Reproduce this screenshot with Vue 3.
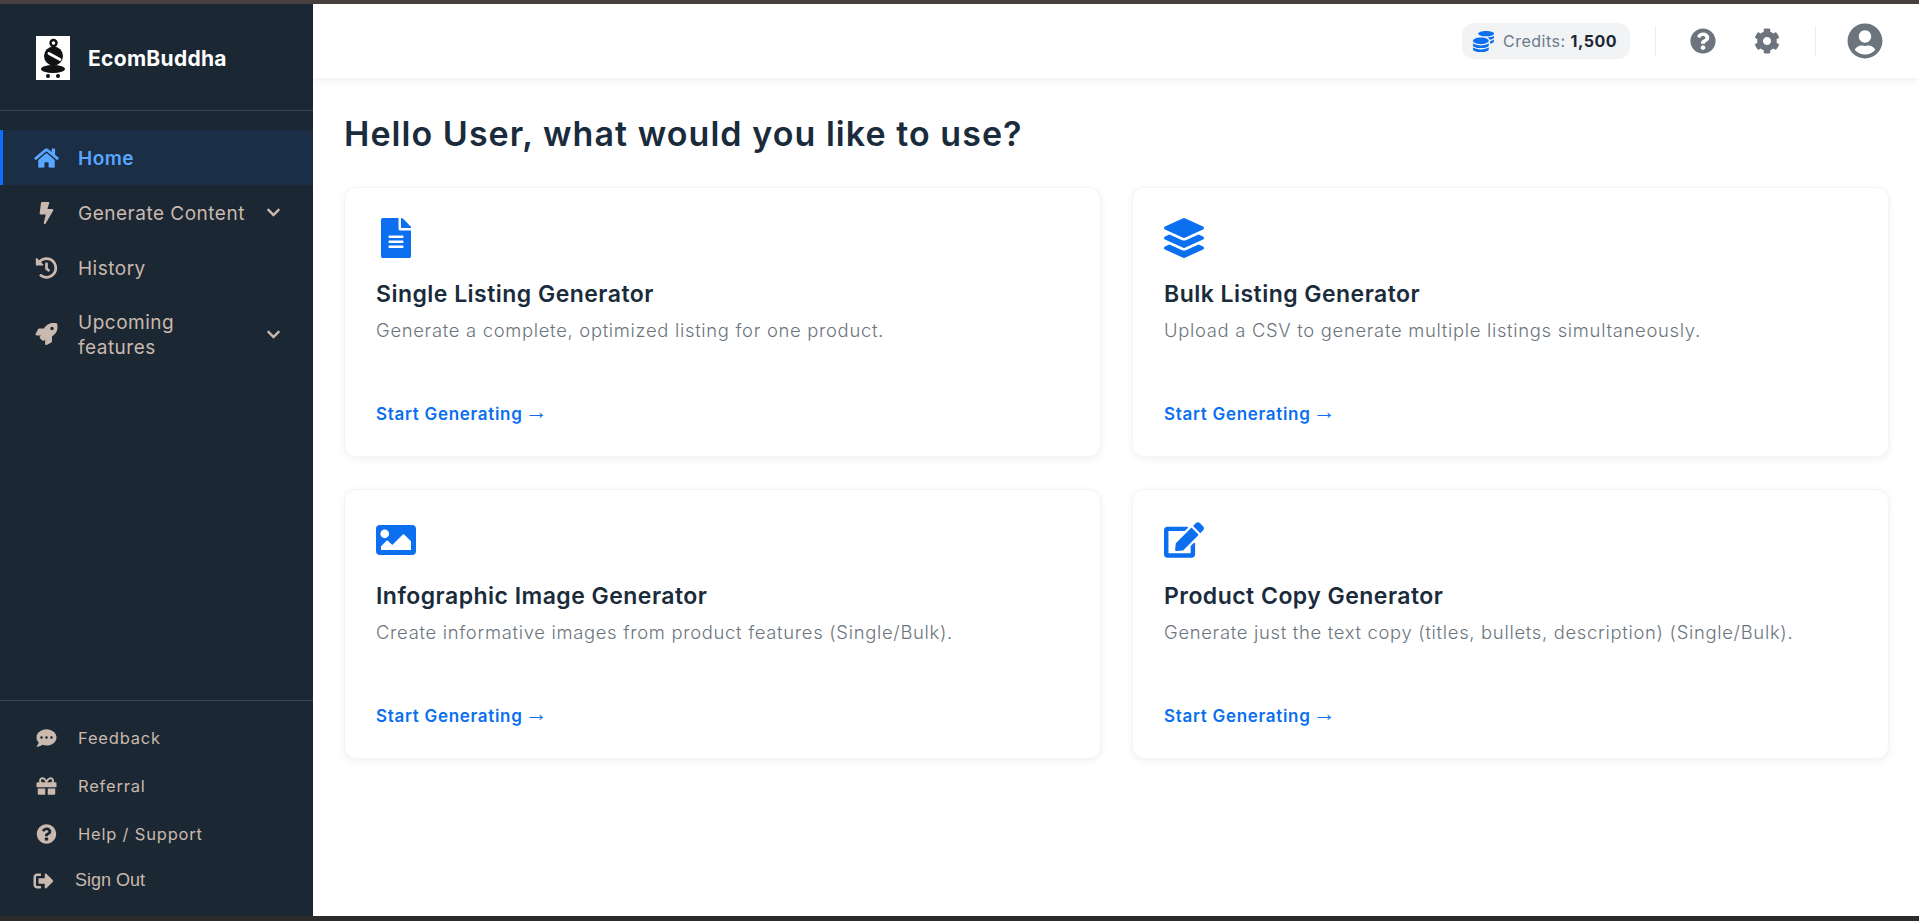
<template>
  <div class="page">
    <div class="strip-top"></div>
    <div class="shell">
      <aside class="sidebar">
        <div class="brand">
          <div class="logo">
            <svg viewBox="0 0 34 44" width="34" height="44">
              <rect width="34" height="44" fill="#fff" />
              <circle cx="17.5" cy="7" r="3" fill="none" stroke="#111" stroke-width="2.4" />
              <circle cx="17.5" cy="20" r="9.5" fill="#111" />
              <path d="M13 17.5 L24 23.5" stroke="#fff" stroke-width="2.8" stroke-linecap="round" />
              <ellipse cx="17" cy="33" rx="12" ry="4" fill="#111" />
              <circle cx="12" cy="40" r="2" fill="#111" />
              <circle cx="22" cy="40" r="2" fill="#111" />
            </svg>
          </div>
          <span class="brand-name">EcomBuddha</span>
        </div>

        <nav class="nav">
          <a v-for="item in navItems" :key="item.label" class="nav-item" :class="{ active: item.active }">
            <svg class="nav-icon" :viewBox="item.box"><path :d="item.d" fill="currentColor" /></svg>
            <span class="nav-label">{{ item.label }}</span>
            <svg v-if="item.caret" class="caret" viewBox="0 0 448 512"><path :d="chevron" fill="currentColor" /></svg>
          </a>
        </nav>

        <div class="foot">
          <a v-for="item in footItems" :key="item.label" class="foot-item">
            <svg class="foot-icon" :viewBox="item.box"><path :d="item.d" fill="currentColor" /></svg>
            <span>{{ item.label }}</span>
          </a>
          <a class="sign-out">
            <svg class="foot-icon" viewBox="0 0 512 512"><path :d="signOut" fill="currentColor" /></svg>
            <span>Sign Out</span>
          </a>
        </div>
      </aside>

      <div class="content">
        <header class="topbar">
          <div class="credits">
            <svg class="coins" viewBox="0 0 512 512"><path :d="coins" fill="currentColor" /></svg>
            <span>Credits: <b>1,500</b></span>
          </div>
          <div class="divider first"></div>
          <svg class="top-icon help" viewBox="0 0 512 512"><path :d="question" fill="currentColor" /></svg>
          <svg class="top-icon gear" viewBox="0 0 512 512"><path :d="cog" fill="currentColor" /></svg>
          <div class="divider second"></div>
          <svg class="avatar" viewBox="0 0 496 512"><path :d="userCircle" fill="currentColor" /></svg>
        </header>

        <main class="main">
          <h1>Hello User, what would you like to use?</h1>
          <div class="grid">
            <div v-for="card in cards" :key="card.title" class="card">
              <svg class="card-icon" :viewBox="card.box"><path :d="card.d" fill="currentColor" /></svg>
              <h2>{{ card.title }}</h2>
              <p>{{ card.text }}</p>
              <a class="start">Start Generating <span class="arrow">→</span></a>
            </div>
          </div>
        </main>
      </div>
    </div>
    <div class="strip-bottom"></div>
  </div>
</template>

<script setup>
const chevron = 'M207.029 381.476L12.686 187.132c-9.373-9.373-9.373-24.569 0-33.941l22.667-22.667c9.357-9.357 24.522-9.375 33.901-.04L224 284.505l154.745-154.021c9.379-9.335 24.544-9.317 33.901.04l22.667 22.667c9.373 9.373 9.373 24.569 0 33.941L240.971 381.476c-9.373 9.372-24.569 9.372-33.942 0z'
const question = 'M504 256c0 136.997-111.043 248-248 248S8 392.997 8 256C8 119.083 119.043 8 256 8s248 111.083 248 248zM262.655 90c-54.497 0-89.255 22.957-116.549 63.758-3.536 5.286-2.353 12.415 2.715 16.258l34.699 26.31c5.205 3.947 12.621 3.008 16.665-2.122 17.864-22.658 30.113-35.797 57.303-35.797 20.429 0 45.698 13.148 45.698 32.958 0 14.976-12.363 22.667-32.534 33.976C247.128 238.528 216 254.941 216 296v4c0 6.627 5.373 12 12 12h56c6.627 0 12-5.373 12-12v-1.333c0-28.462 83.186-29.647 83.186-106.667 0-58.002-60.165-102-116.531-102zM256 338c-25.365 0-46 20.635-46 46 0 25.364 20.635 46 46 46s46-20.636 46-46c0-25.365-20.635-46-46-46z'
const signOut = 'M497 273L329 441c-15 15-41 4.5-41-17v-96H152c-13.3 0-24-10.7-24-24v-96c0-13.3 10.7-24 24-24h136V88c0-21.4 25.9-32 41-17l168 168c9.3 9.4 9.3 24.6 0 34zM192 436v-40c0-6.6-5.4-12-12-12H96c-17.7 0-32-14.3-32-32V160c0-17.7 14.3-32 32-32h84c6.6 0 12-5.4 12-12V76c0-6.6-5.4-12-12-12H96c-53 0-96 43-96 96v192c0 53 43 96 96 96h84c6.6 0 12-5.4 12-12z'
const cog = 'M487.4 315.7l-42.6-24.6c4.3-23.2 4.3-47 0-70.2l42.6-24.6c4.9-2.8 7.1-8.6 5.5-14-11.1-35.6-30-67.8-54.7-94.6-3.8-4.1-10-5.1-14.8-2.3L380.8 110c-17.9-15.4-38.5-27.3-60.8-35.1V25.8c0-5.6-3.9-10.5-9.4-11.7-36.7-8.2-74.3-7.8-109.2 0-5.5 1.2-9.4 6.1-9.4 11.7V75c-22.2 7.9-42.8 19.8-60.8 35.1L88.7 85.5c-4.9-2.8-11-1.9-14.8 2.3-24.7 26.7-43.6 58.9-54.7 94.6-1.7 5.4.6 11.2 5.5 14L67.3 221c-4.3 23.2-4.3 47 0 70.2l-42.6 24.6c-4.9 2.8-7.1 8.6-5.5 14 11.1 35.6 30 67.8 54.7 94.6 3.8 4.1 10 5.1 14.8 2.3l42.6-24.6c17.9 15.4 38.5 27.3 60.8 35.1v49.2c0 5.6 3.9 10.5 9.4 11.7 36.7 8.2 74.3 7.8 109.2 0 5.5-1.2 9.4-6.1 9.4-11.7v-49.2c22.2-7.9 42.8-19.8 60.8-35.1l42.6 24.6c4.9 2.8 11 1.9 14.8-2.3 24.7-26.7 43.6-58.9 54.7-94.6 1.5-5.5-.7-11.3-5.6-14.1zM256 336c-44.1 0-80-35.9-80-80s35.9-80 80-80 80 35.9 80 80-35.9 80-80 80z'
const userCircle = 'M248 8C111 8 0 119 0 256s111 248 248 248 248-111 248-248S385 8 248 8zm0 96c48.6 0 88 39.4 88 88s-39.4 88-88 88-88-39.4-88-88 39.4-88 88-88zm0 344c-58.7 0-111.3-26.6-146.5-68.2 18.8-35.4 55.6-59.8 98.5-59.8 2.4 0 4.8.4 7.1 1.1 13 4.2 26.6 6.9 40.9 6.9 14.3 0 28-2.7 40.9-6.9 2.3-.7 4.7-1.1 7.1-1.1 42.9 0 79.7 24.4 98.5 59.8C359.3 421.4 306.7 448 248 448z'
const coins = 'M0 405.3V448c0 35.3 86 64 192 64s192-28.7 192-64v-42.7C342.7 434.4 267.2 448 192 448S41.3 434.4 0 405.3zM320 128c106 0 192-28.7 192-64S426 0 320 0 128 28.7 128 64s86 64 192 64zM0 300.4V352c0 35.3 86 64 192 64s192-28.7 192-64v-51.6c-41.3 34-116.9 51.6-192 51.6S41.3 334.4 0 300.4zm416 11c57.3-11.1 96-31.7 96-55.4v-42.7c-23.2 16.4-57.3 27.6-96 34.5v63.6zM192 160C86 160 0 195.8 0 240s86 80 192 80 192-35.8 192-80-86-80-192-80zm219.3 56.3c60-10.8 100.7-32 100.7-56.3v-42.7c-35.5 25.1-96.5 38.6-160.7 41.8 29.5 14.3 51.2 33.5 60 57.2z'

const navItems = [
  { label: 'Home', active: true, box: '0 0 576 512', d: 'M280.37 148.26L96 300.11V464a16 16 0 0 0 16 16l112.06-.29a16 16 0 0 0 15.92-16V368a16 16 0 0 1 16-16h64a16 16 0 0 1 16 16v95.64a16 16 0 0 0 16 16.05L464 480a16 16 0 0 0 16-16V300L295.67 148.26a12.19 12.19 0 0 0-15.3 0zM571.6 251.47L488 182.56V44.05a12 12 0 0 0-12-12h-56a12 12 0 0 0-12 12v72.61L318.47 43a48 48 0 0 0-61 0L4.34 251.47a12 12 0 0 0-1.6 16.9l25.5 31A12 12 0 0 0 45.15 301l235.22-193.74a12.19 12.19 0 0 1 15.3 0L530.9 301a12 12 0 0 0 16.9-1.6l25.5-31a12 12 0 0 0-1.7-16.93z' },
  { label: 'Generate Content', caret: true, box: '0 0 320 512', d: 'M296 160H180.6l42.6-129.8C227.2 15 215.7 0 200 0H56C44 0 33.8 8.9 32.2 20.8l-32 240C-1.7 275.2 9.5 288 24 288h118.7L96.6 482.5c-3.6 15.2 8 29.5 23.3 29.5 8.4 0 16.4-4.4 20.8-12l176-304c9.3-15.9-2.2-36-20.7-36z' },
  { label: 'History', box: '0 0 512 512', d: 'M504 255.531c.253 136.64-111.18 248.372-247.82 248.468-59.015.042-113.223-20.53-155.822-54.911-11.077-8.94-11.905-25.541-1.839-35.607l11.267-11.267c8.609-8.609 22.353-9.551 31.891-1.984C173.062 425.135 212.781 440 256 440c101.705 0 184-82.311 184-184 0-101.705-82.311-184-184-184-48.814 0-93.149 18.969-126.068 49.932l50.754 50.754c10.08 10.08 2.941 27.314-11.313 27.314H24c-8.837 0-16-7.163-16-16V38.627c0-14.254 17.234-21.393 27.314-11.314l49.372 49.372C129.209 34.136 189.552 8 256 8c136.81 0 247.747 110.78 248 247.531zm-180.912 78.784l9.823-12.63c8.138-10.463 6.253-25.542-4.21-33.679L288 256.349V152c0-13.255-10.745-24-24-24h-16c-13.255 0-24 10.745-24 24v135.651l65.409 50.874c10.463 8.137 25.541 6.253 33.679-4.21z' },
  { label: 'Upcoming\nfeatures', caret: true, box: '0 0 512 512', d: 'M505.12 19.09c-1.19-5.53-6.66-11-12.21-12.19C460.72 0 435.51 0 410.41 0 307.18 0 245.27 55.2 199.05 128H94.84c-16.35.02-35.56 11.88-42.89 26.48L2.52 253.3A28.4 28.4 0 0 0 0 264a24 24 0 0 0 24.01 24h103.81l-22.48 22.47c-11.36 11.36-13 32.26 0 45.25l50.91 50.91c11.16 11.19 32.16 13.16 45.28 0L224 384.16V488a24 24 0 0 0 24 24 28.56 28.56 0 0 0 10.71-2.52l98.73-49.39c14.63-7.3 26.51-26.5 26.51-42.86V312.8c72.6-46.31 128.03-108.41 128.03-211.1.1-25.2.1-50.4-6.86-82.61zM384.04 168a40 40 0 1 1 40.01-40 40.02 40.02 0 0 1-40.01 40z' }
]

const footItems = [
  { label: 'Feedback', box: '0 0 512 512', d: 'M256 32C114.6 32 0 125.1 0 240c0 49.6 21.4 95 57 130.7C44.5 421.1 2.7 466 2.2 466.5c-2.2 2.3-2.8 5.7-1.5 8.7S4.8 480 8 480c66.3 0 116-31.8 140.6-51.4 32.7 12.3 69 19.4 107.4 19.4 141.4 0 256-93.1 256-208S397.4 32 256 32zM128 272c-17.7 0-32-14.3-32-32s14.3-32 32-32 32 14.3 32 32-14.3 32-32 32zm128 0c-17.7 0-32-14.3-32-32s14.3-32 32-32 32 14.3 32 32-14.3 32-32 32zm128 0c-17.7 0-32-14.3-32-32s14.3-32 32-32 32 14.3 32 32-14.3 32-32 32z' },
  { label: 'Referral', box: '0 0 512 512', d: 'M32 448c0 17.7 14.3 32 32 32h160V320H32v128zm256 32h160c17.7 0 32-14.3 32-32V320H288v160zm192-320h-42.1c6.2-12.1 10.1-25.5 10.1-40 0-48.5-39.5-88-88-88-41.6 0-68.5 21.3-103 68.3-34.5-47-61.4-68.3-103-68.3-48.5 0-88 39.5-88 88 0 14.5 3.8 27.9 10.1 40H32c-17.7 0-32 14.3-32 32v80c0 8.8 7.2 16 16 16h480c8.8 0 16-7.2 16-16v-80c0-17.7-14.3-32-32-32zm-326.1 0c-22.1 0-40-17.9-40-40s17.9-40 40-40c19.9 0 34.6 3.3 86.1 80h-86.1zm206.1 0h-86.1c51.4-76.5 65.7-80 86.1-80 22.1 0 40 17.9 40 40s-17.9 40-40 40z' },
  { label: 'Help / Support', box: '0 0 512 512', d: question }
]

const cards = [
  { title: 'Single Listing Generator', text: 'Generate a complete, optimized listing for one product.', box: '0 0 384 512', d: 'M224 136V0H24C10.7 0 0 10.7 0 24v464c0 13.3 10.7 24 24 24h336c13.3 0 24-10.7 24-24V160H248c-13.2 0-24-10.8-24-24zm64 236c0 6.6-5.4 12-12 12H108c-6.6 0-12-5.4-12-12v-8c0-6.6 5.4-12 12-12h168c6.6 0 12 5.4 12 12v8zm0-64c0 6.6-5.4 12-12 12H108c-6.6 0-12-5.4-12-12v-8c0-6.6 5.4-12 12-12h168c6.6 0 12 5.4 12 12v8zm0-72v8c0 6.6-5.4 12-12 12H108c-6.6 0-12-5.4-12-12v-8c0-6.6 5.4-12 12-12h168c6.6 0 12 5.4 12 12zm96-114.1v6.1H256V0h6.1c6.4 0 12.5 2.5 17 7l97.9 98c4.5 4.5 7 10.6 7 16.9z' },
  { title: 'Bulk Listing Generator', text: 'Upload a CSV to generate multiple listings simultaneously.', box: '0 0 512 512', d: 'M12.41 148.02l232.94 105.67c6.8 3.09 14.49 3.09 21.29 0l232.94-105.67c16.55-7.51 16.55-32.52 0-40.03L266.65 2.31a25.607 25.607 0 0 0-21.29 0L12.41 107.98c-16.55 7.51-16.55 32.53 0 40.04zm487.18 88.28l-58.09-26.33-161.64 73.27c-7.56 3.43-15.59 5.17-23.86 5.17s-16.29-1.74-23.86-5.17L70.51 209.97l-58.1 26.33c-16.55 7.5-16.55 32.5 0 40l232.94 105.59c6.8 3.08 14.49 3.08 21.29 0L499.59 276.3c16.55-7.5 16.55-32.5 0-40zm0 127.8l-57.87-26.23-161.86 73.37c-7.56 3.43-15.59 5.17-23.86 5.17s-16.29-1.74-23.86-5.17L70.29 337.87 12.41 364.1c-16.55 7.5-16.55 32.5 0 40l232.94 105.59c6.8 3.08 14.49 3.08 21.29 0L499.59 404.1c16.55-7.5 16.55-32.5 0-40z' },
  { title: 'Infographic Image Generator', text: 'Create informative images from product features (Single/Bulk).', box: '0 0 512 512', d: 'M464 448H48c-26.51 0-48-21.49-48-48V112c0-26.51 21.49-48 48-48h416c26.51 0 48 21.49 48 48v288c0 26.51-21.49 48-48 48zM112 120c-30.928 0-56 25.072-56 56s25.072 56 56 56 56-25.072 56-56-25.072-56-56-56zM64 384h384V272l-87.515-87.515c-4.686-4.686-12.284-4.686-16.971 0L208 320l-55.515-55.515c-4.686-4.686-12.284-4.686-16.971 0L64 336v48z' },
  { title: 'Product Copy Generator', text: 'Generate just the text copy (titles, bullets, description) (Single/Bulk).', box: '0 0 576 512', d: 'M402.6 83.2l90.2 90.2c3.8 3.8 3.8 10 0 13.8L274.4 405.6l-92.8 10.3c-12.4 1.4-22.9-9.1-21.5-21.5l10.3-92.8L388.8 83.2c3.8-3.8 10-3.8 13.8 0zm162-22.9l-48.8-48.8c-15.2-15.2-39.9-15.2-55.2 0l-35.4 35.4c-3.8 3.8-3.8 10 0 13.8l90.2 90.2c3.8 3.8 10 3.8 13.8 0l35.4-35.4c15.2-15.3 15.2-40 0-55.2zM384 346.2V448H64V128h229.8c3.2 0 6.2-1.3 8.5-3.5l40-40c7.6-7.6 2.2-20.5-8.5-20.5H48C21.5 64 0 85.5 0 112v352c0 26.5 21.5 48 48 48h352c26.5 0 48-21.5 48-48V306.2c0-10.7-12.9-16-20.5-8.5l-40 40c-2.2 2.3-3.5 5.3-3.5 8.5z' }
]
</script>

<style>
html, body {
  margin: 0;
  height: 100%;
  overflow: hidden;
  background: #fff;
}
</style>

<style scoped>
.page {
  height: 921px;
  display: flex;
  flex-direction: column;
  font-family: Inter, "Open Sans", sans-serif;
  color: #1a2b3c;
}

.strip-top {
  height: 4px;
  background: #493f3f;
  flex: none;
}

.strip-bottom {
  height: 5px;
  background: #2b2b2b;
  flex: none;
}

.shell {
  flex: 1;
  display: flex;
  min-height: 0;
}

.sidebar {
  width: 313px;
  flex: none;
  background: #1b2733;
  color: #c9b9ae;
  display: flex;
  flex-direction: column;
}

.brand {
  height: 106px;
  border-bottom: 1px solid #36465a;
  display: flex;
  align-items: center;
  padding-left: 36px;
  gap: 18px;
}

.logo {
  width: 34px;
  height: 44px;
  margin-top: 2px;
}

.brand-name {
  color: #fff;
  font-weight: 700;
  font-size: 21px;
  letter-spacing: 0.3px;
  padding-top: 2px;
}

.nav {
  margin-top: 19px;
  flex: 1;
}

.nav-item {
  display: flex;
  align-items: center;
  min-height: 55px;
  padding-left: 34px;
  padding-right: 32px;
  font-size: 19px;
  letter-spacing: 0.5px;
  line-height: 25px;
}

.nav-item.active {
  background: #1a2e46;
  color: #5aa5ff;
  box-shadow: inset 3px 0 0 #0d6efd;
  font-weight: 600;
}

.nav-icon {
  width: 25px;
  height: 22px;
  flex: none;
}

.nav-label {
  margin-left: 19px;
  flex: 1;
  padding-top: 1px;
  white-space: pre-line;
}

.caret {
  width: 15px;
  height: 15px;
  flex: none;
}

.nav-item:last-child {
  min-height: 78px;
}

.foot {
  border-top: 1px solid #36465a;
  padding: 12.5px 0 12.5px 36px;
  font-size: 16.5px;
  letter-spacing: 0.8px;
}

.foot-item {
  display: flex;
  align-items: center;
  height: 48px;
  gap: 21px;
}

.foot-icon {
  width: 21px;
  height: 20px;
  flex: none;
}

.sign-out {
  display: flex;
  align-items: center;
  height: 46px;
  margin-left: -3px;
  gap: 21px;
  font-family: "Liberation Sans", sans-serif;
  font-size: 18px;
  letter-spacing: 0;
}

.content {
  flex: 1;
  min-width: 0;
  display: flex;
  flex-direction: column;
}

.topbar {
  height: 74px;
  flex: none;
  background: #fff;
  box-shadow: 0 2px 8px rgba(0, 0, 0, 0.07);
  display: flex;
  align-items: center;
  padding-right: 36px;
  justify-content: flex-end;
  position: relative;
}

.credits {
  height: 36px;
  width: 168px;
  box-sizing: border-box;
  background: #f1f3f5;
  border-radius: 12px;
  display: flex;
  align-items: center;
  padding-left: 11px;
  gap: 9px;
  font-size: 16px;
  letter-spacing: 0.5px;
  color: #6c7a89;
}

.credits b {
  color: #1a2733;
}

.coins {
  width: 21px;
  height: 21px;
  color: #0b6fef;
}

.divider {
  width: 1px;
  height: 30px;
  background: #e9ecef;
}

.divider.first {
  margin-left: 25px;
}

.divider.second {
  margin-left: 35px;
}

.top-icon {
  width: 26px;
  height: 26px;
  color: #6c757d;
}

.help {
  margin-left: 34px;
}

.gear {
  margin-left: 38px;
}

.avatar {
  width: 36px;
  height: 36px;
  color: #6c757d;
  margin-left: 31px;
}

.main {
  flex: 1;
  padding: 33px 30px 0 31px;
  background: #fff;
}

h1 {
  margin: 0 0 30px;
  font-size: 34px;
  letter-spacing: 1.05px;
  line-height: 46px;
  font-weight: 600;
}

.grid {
  display: grid;
  grid-template-columns: 1fr 1fr;
  grid-auto-rows: 270px;
  gap: 32px 31px;
}

.card {
  background: #fff;
  border-radius: 12px;
  border: 1px solid #f4f4f4;
  box-shadow: 0 2px 8px rgba(0, 0, 0, 0.06);
  padding: 30px 31px;
  box-sizing: border-box;
  display: flex;
  flex-direction: column;
}

.card-icon {
  width: 40px;
  height: 40px;
  flex: none;
  color: #0b6fef;
}

h2 {
  margin: 20px 0 0;
  font-size: 23px;
  letter-spacing: 0.47px;
  line-height: 32px;
  font-weight: 600;
}

p {
  margin: 7px 0 0;
  font-size: 18.4px;
  letter-spacing: 0.7px;
  line-height: 27px;
  font-weight: 300;
  color: #6c757d;
}

.start {
  margin-top: auto;
  color: #0b6fef;
  font-size: 17px;
  letter-spacing: 0.7px;
  font-weight: 600;
  line-height: 24px;
}

.arrow {
  font-family: "Liberation Sans", sans-serif;
  font-size: 23px;
  line-height: 0;
  font-weight: 400;
  letter-spacing: 0;
  margin-left: -3px;
  vertical-align: 1px;
}
</style>
